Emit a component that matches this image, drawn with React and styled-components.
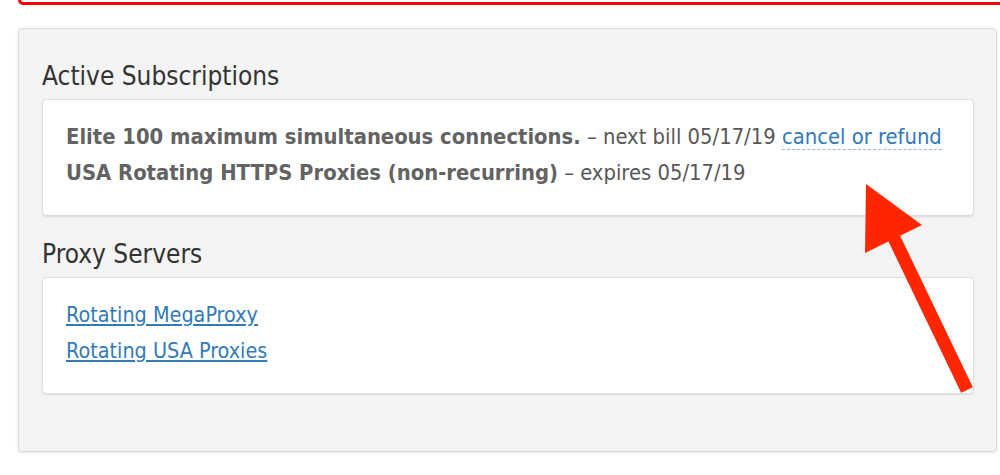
import styled, { createGlobalStyle } from "styled-components"

const GlobalStyle = createGlobalStyle`
  html, body {
    margin: 0;
    padding: 0;
    background: #fff;
    overflow: hidden;
  }
  body {
    font-family: "DejaVu Sans Condensed", "DejaVu Sans", sans-serif;
  }
`

const subscriptions = [
  { name: "Elite 100 maximum simultaneous connections.", note: "next bill 05/17/19", action: "cancel or refund" },
  { name: "USA Rotating HTTPS Proxies (non-recurring)", note: "expires 05/17/19" },
]

const servers = ["Rotating MegaProxy", "Rotating USA Proxies"]

export default function App() {
  return (
    <Page>
      <GlobalStyle />
      <Notice />
      <Panel>
        <Heading>Active Subscriptions</Heading>
        <Card>
          {subscriptions.map(sub => (
            <Line key={sub.name}>
              <strong>{sub.name}</strong> – {sub.note}
              {sub.action && <> <ActionLink href="#">{sub.action}</ActionLink></>}
            </Line>
          ))}
        </Card>

        <Heading>Proxy Servers</Heading>
        <Card>
          {servers.map(server => (
            <Line key={server}>
              <ServerLink href="#">{server}</ServerLink>
            </Line>
          ))}
        </Card>
      </Panel>

      <Arrow viewBox="0 0 1000 475">
        <polygon points="866,184 865,253 922,225" />
        <line x1="894" y1="238" x2="967" y2="390" />
      </Arrow>
    </Page>
  )
}

const Page = styled.div`
  position: relative;
  width: 1000px;
  height: 475px;
  overflow: hidden;
`
const Notice = styled.div`
  height: 2px;
  margin: 0 -20px 0 18px;
  border: 3px solid #ff0000;
  border-top: none;
  border-radius: 0 0 0 8px;
`
const Panel = styled.section`
  margin: 23px 3px 0 18px;
  padding: 33px 22px 57px 23px;
  background: #f4f4f4;
  border: 1px solid #dcdcdc;
  border-radius: 4px;
  box-shadow: 0 1px 3px rgba(0, 0, 0, 0.1);
`
const Heading = styled.h3`
  margin: 0 0 9px;
  font-size: 26px;
  line-height: 28px;
  font-weight: normal;
  color: #333;
`
const Card = styled.div`
  padding: 19px 23px 24px;
  background: #fff;
  border: 1px solid #dedede;
  border-radius: 4px;
  box-shadow: 0 1px 2px rgba(0, 0, 0, 0.1);
  & + h3 {
    margin-top: 24px;
  }
`
const Line = styled.div`
  font-size: 21.8px;
  line-height: 36px;
  color: #575757;
  white-space: nowrap;
  strong {
    color: #636363;
  }
`
const ActionLink = styled.a`
  color: #337ab7;
  text-decoration: none;
  border-bottom: 1px dashed #9bb8d3;
`
const ServerLink = styled.a`
  font-size: 21.4px;
  color: #337ab7;
  text-decoration: underline;
`
const Arrow = styled.svg`
  position: absolute;
  left: 0;
  top: 0;
  width: 1000px;
  height: 475px;
  pointer-events: none;
  polygon {
    fill: #ff2600;
  }
  line {
    stroke: #ff2600;
    stroke-width: 13;
  }
`
